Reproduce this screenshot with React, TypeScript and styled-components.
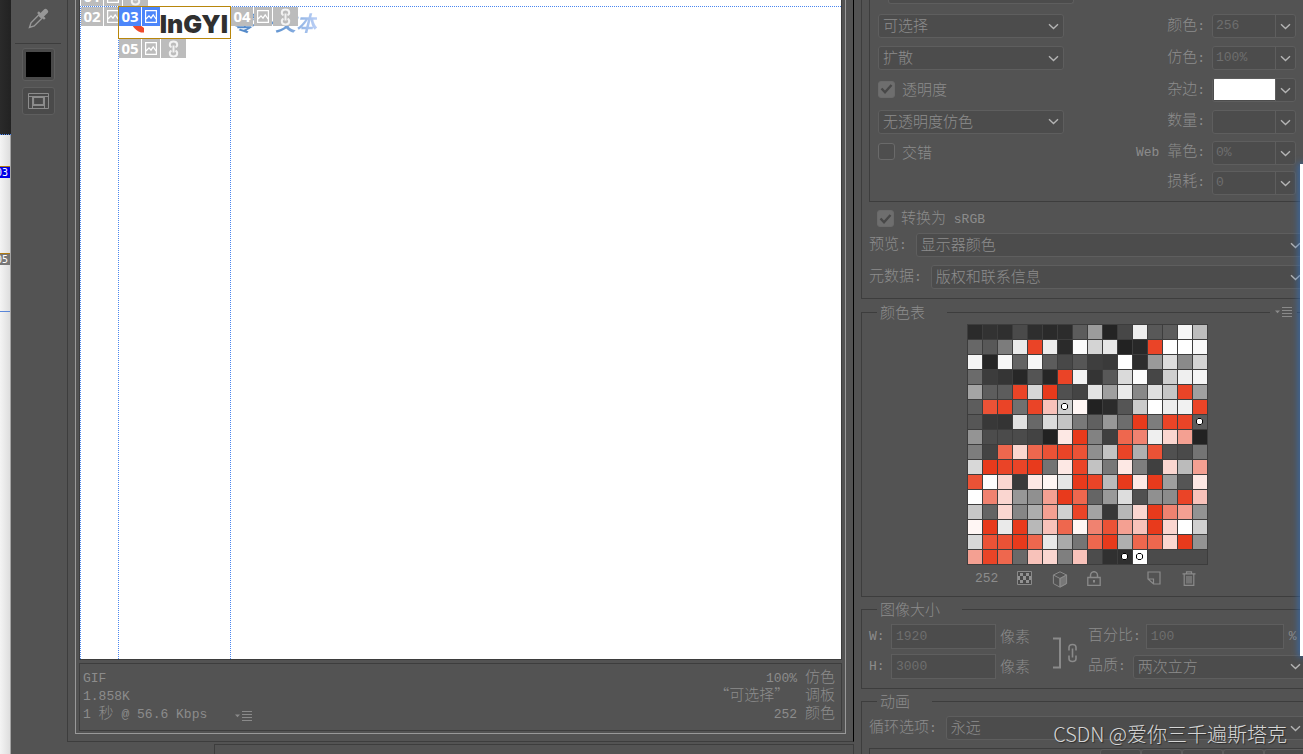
import React from 'react';
import styled, { createGlobalStyle, css } from 'styled-components';

const c = {
  panel: '#535353',
  field: '#4c4c4c',
  edge: '#5e5e5e',
  line: '#3d3d3d',
  text: '#8c8c8c',
  dim: '#6e6e6e',
  icon: '#8a8a8a',
  chevron: '#b4b4b4',
  guide: '#4a86f0',
};

const cjk = '"Noto Sans CJK SC", "Noto Sans", sans-serif';
const mono = '"Liberation Mono", "Noto Sans CJK SC", monospace';

const Global = createGlobalStyle`
  *, *::before, *::after { box-sizing: border-box; }
  body {
    margin: 0;
    background: ${c.panel};
    color: ${c.text};
    font-family: ${cjk};
    font-weight: 300;
    font-size: 15px;
    line-height: 22px;
    overflow: hidden;
  }
  button, input, select { font: inherit; color: inherit; margin: 0; }
`;

const Page = styled.div`
  position: relative;
  display: flex;
  height: 100vh;
  overflow: hidden;
`;

const En = styled.span`
  font-family: ${mono};
  font-size: 13px;
  white-space: pre;
`;

/* ---------- document edge behind the dialog ---------- */

const Behind = styled.div`
  flex: none;
  width: 11px;
  display: flex;
  flex-direction: column;
  overflow: hidden;
`;

const BehindDark = styled.div`
  height: 135px;
  flex: none;
  background: linear-gradient(90deg, #2a2a2a, #222);
  border-bottom: 1px dotted ${c.guide};
`;

const BehindPage = styled.div`
  flex: 1;
  padding-top: 31px;
  background: linear-gradient(90deg, #f4f4f4, #dedede);
  border-right: 1px solid #a4a4a4;
`;

const BehindSlice = styled.div<{ $color: string; $height: number }>`
  height: ${p => p.$height}px;
  border-top: 1px solid #b07a10;
  display: flex;
  justify-content: flex-end;

  span {
    height: 11px;
    padding-right: 2px;
    background: ${p => p.$color};
    color: #fff;
    font-family: "DejaVu Sans Mono", monospace;
    font-size: 10px;
    line-height: 11px;
  }
`;

const BehindGuide = styled.div`
  border-top: 1px solid #5a86d8;
`;

/* ---------- tools ---------- */

const Toolbar = styled.nav`
  flex: none;
  width: 56px;
  padding: 6px 6px 0 4px;
  display: flex;
  flex-direction: column;
  align-items: center;
`;

const ToolButton = styled.button<{ $height: number; $bare?: boolean }>`
  width: 33px;
  height: ${p => p.$height}px;
  padding: 0;
  display: flex;
  align-items: center;
  justify-content: center;
  border: 1px solid ${p => (p.$bare ? 'transparent' : c.edge)};
  border-radius: 3px;
  background: ${p => (p.$bare ? 'none' : '#4a4a4a')};
  color: ${c.icon};
`;

const ToolDivider = styled.hr`
  width: 46px;
  margin: 13px 0 4px;
  border: 0;
  border-top: 1px solid ${c.line};
`;

const BlackSwatch = styled.span`
  width: 25px;
  height: 25px;
  background: #000;
`;

const ToolGap = styled.div`
  height: 6px;
`;

/* ---------- preview ---------- */

const Preview = styled.main`
  flex: 1;
  min-width: 0;
  display: flex;
  flex-direction: column;
`;

const PreviewOuter = styled.div`
  flex: 1;
  min-height: 0;
  display: flex;
  padding: 0 7px 7px;
  border: solid ${c.line};
  border-width: 0 0 1px 1px;
  border-right: 1px solid #000;
`;

const PreviewFrame = styled.div`
  flex: 1;
  min-width: 0;
  display: flex;
  flex-direction: column;
  padding: 0 3px 2px;
  border: solid #999;
  border-width: 0 1px 1px;
`;

const Canvas = styled.div`
  position: relative;
  flex: 1;
  min-height: 0;
  overflow: hidden;
  margin-bottom: 3px;
  border: solid ${c.line};
  border-width: 0 1px 1px;
  background: #fff;
`;

const GuideH = styled.div`
  position: absolute;
  top: 6px;
  left: 0;
  right: 0;
  border-top: 1px dotted ${c.guide};
`;

const GuideV = styled.div<{ $x: number }>`
  position: absolute;
  top: 6px;
  bottom: 0;
  left: ${p => p.$x}px;
  border-left: 1px dotted ${c.guide};
`;

const SelectedSlice = styled.div`
  position: absolute;
  left: 38px;
  top: 6px;
  width: 113px;
  height: 33px;
  border: 1px solid #b8860b;
  background: #fff;
`;

const LogoMark = styled.svg`
  position: absolute;
  left: 13px;
  top: 15px;
`;

const LogoText = styled.span`
  position: absolute;
  right: 2px;
  top: 5px;
  color: #303030;
  font-family: Inter, sans-serif;
  font-weight: 900;
  font-size: 25px;
  line-height: 24px;
`;

const BrandText = styled.span`
  position: absolute;
  left: 153px;
  top: 10px;
  font-size: 21px;
  line-height: 24px;
  font-weight: 700;
  font-style: italic;
  color: transparent;
  background: linear-gradient(90deg, #4f86c6, #6a9ad4 60%, #bcd0f6);
  background-clip: text;
`;

const TagRow = styled.div<{ $x: number; $y: number; $active?: boolean }>`
  position: absolute;
  left: ${p => p.$x}px;
  top: ${p => p.$y}px;
  display: flex;
  gap: 1px;
  color: #fff;

  > * {
    height: 19px;
    display: flex;
    align-items: center;
    justify-content: center;
    background: ${p => (p.$active ? '#4c86fa' : '#bcbcbc')};
  }
`;

const TagNumber = styled.span`
  width: 22px;
  padding-bottom: 1px;
  font-family: "Open Sans", sans-serif;
  font-weight: 700;
  font-size: 15px;
  line-height: 18px;
`;

const TagPicture = styled.span`
  width: 18px;
`;

const TagLink = styled.span`
  width: 25px;
`;

const Info = styled.div`
  flex: none;
  height: 68px;
  padding: 3px 6px 0 3px;
  display: flex;
  justify-content: space-between;
  border: 1px solid ${c.line};
  line-height: 18px;
`;

const InfoColumn = styled.div<{ $end?: boolean }>`
  display: flex;
  flex-direction: column;
  text-align: ${p => (p.$end ? 'right' : 'left')};

  > div { height: 18px; white-space: pre; }
`;

const InfoSpeed = styled.div`
  display: flex;
  gap: 28px;
`;

const MenuButton = styled.button`
  padding: 0;
  border: 0;
  background: none;
  color: ${c.icon};
  display: inline-flex;
  align-items: center;
`;

const SpeedMenu = styled(MenuButton)`
  padding-top: 8px;
`;

const PreviewFooter = styled.div`
  flex: none;
  height: 12px;
  padding: 2px 0 0 147px;

  div {
    height: 10px;
    border: solid ${c.line};
    border-width: 1px 1px 0;
  }
`;

/* ---------- settings ---------- */

const Settings = styled.aside`
  flex: none;
  width: 449px;
  padding-left: 7px;
  overflow: hidden;

  label { padding-bottom: 2px; }
`;

const Optimise = styled.section`
  margin-bottom: 2px;
  padding-left: 7px;
  border: solid ${c.line};
  border-width: 0 0 1px 1px;
  height: 299px;
`;

const OptimiseBox = styled.div`
  height: 202px;
  padding: 0 7px 0 8px;
  border: solid ${c.line};
  border-width: 0 0 1px 1px;
`;

const CutField = styled.div`
  width: 186px;
  height: 4px;
  margin: 0 0 6px 10px;
  border: solid ${c.edge};
  border-width: 0 1px 1px;
  border-radius: 0 0 3px 3px;
  background: ${c.field};
`;

const OptionGrid = styled.div`
  display: grid;
  grid-template-columns: 186px 1fr;
  grid-template-rows: repeat(3, 32px) repeat(2, 31px) 29px;
  align-items: center;
`;

const OptionRight = styled.div`
  grid-column: 2;
  display: flex;
  align-items: center;
  justify-content: flex-end;
  gap: 7px;
`;

const boxed = css`
  border: 1px solid ${c.edge};
  border-radius: 3px;
  background: ${c.field};
`;

const SelectWrap = styled.span<{ $bleed?: boolean }>`
  flex: 1;
  display: grid;
  align-items: center;
  margin-right: ${p => (p.$bleed ? '-3px' : '0')};

  > * { grid-area: 1 / 1; }
  > svg { justify-self: end; margin-right: 5px; pointer-events: none; }
`;

const SelectBox = styled.select`
  ${boxed}
  appearance: none;
  width: 100%;
  height: 24px;
  padding: 0 4px 2px;
  line-height: 20px;
  color: ${c.text};
`;

const Combo = styled.span`
  ${boxed}
  flex: none;
  display: flex;
  width: 84px;
  height: 24px;
  overflow: hidden;
`;

const ComboInput = styled.input`
  flex: 1;
  min-width: 0;
  padding: 0 3px;
  border: 0;
  background: none;
  color: ${c.dim};
  font-family: ${mono};
  font-size: 13px;
`;

const ComboColor = styled.button`
  flex: 1;
  margin: 0 0 1px 1px;
  padding: 0;
  border: 0;
  background: #fff;
`;

const ComboArrow = styled.button`
  width: 20px;
  padding: 1px 0 0;
  display: flex;
  align-items: center;
  justify-content: center;
  border: 0;
  border-left: 1px solid ${c.edge};
  background: none;
`;

const CheckLabel = styled.label`
  display: flex;
  align-items: center;
  gap: 7px;
  white-space: pre;
`;

const CheckBox = styled.input`
  appearance: none;
  width: 17px;
  height: 17px;
  border: 1px solid #6a6a6a;
  border-radius: 3px;
  background: #4e4e4e;

  &:checked {
    background: #6e6e6e;
  }
`;

const CheckHolder = styled.span`
  display: grid;
  place-items: center;
  > * { grid-area: 1 / 1; }
  svg { pointer-events: none; }
`;

const Row = styled.div`
  display: flex;
  align-items: center;
  gap: 9px;
  height: 24px;
  margin-bottom: 8px;
  white-space: nowrap;
`;

const ConvertRow = styled.div`
  height: 31px;
  padding: 4px 0 0 8px;
`;

const LoopRow = styled(Row)`
  margin-top: 4px;
`;

const Group = styled.fieldset<{ $height: number }>`
  position: relative;
  min-width: 0;
  height: ${p => p.$height}px;
  margin: 0 0 1px;
  padding: 0 0 0 7px;
  border: solid ${c.line};
  border-width: 1px 0 1px 1px;
`;

const Legend = styled.legend`
  height: 22px;
  margin-left: 8px;
  padding: 0 22px 0 3px;
`;

const GroupMenu = styled.span`
  position: absolute;
  right: 6px;
  top: -22px;
  height: 22px;
  padding: 0 4px 0 5px;
  display: flex;
  align-items: center;
  background: ${c.panel};
`;

const PaletteArea = styled.div`
  width: 241px;
  margin: 1px 0 0 98px;
`;

const Palette = styled.div`
  display: grid;
  grid-template-columns: repeat(16, 14px);
  grid-auto-rows: 14px;
  gap: 1px;
  padding: 1px;
  background: ${c.line};
`;

const Swatch = styled.span<{ $color: string; $span?: number }>`
  grid-column: span ${p => p.$span ?? 1};
  display: grid;
  place-items: center;
  padding: 0 1px 1px 0;
  background: ${p => p.$color};
`;

const PaletteTools = styled.div`
  display: flex;
  align-items: center;
  height: 28px;
  padding: 0 10px 0 8px;
  gap: 19px;
`;

const Spacer = styled.span`
  flex: 1;
`;

const IconButton = styled.button`
  width: 16px;
  height: 16px;
  padding: 0;
  border: 0;
  background: none;
  color: ${c.icon};
  display: flex;
`;

const SizeGrid = styled.div`
  display: flex;
  padding-top: 4px;
`;

const SizeColumn = styled.div<{ $grow?: boolean }>`
  flex: ${p => (p.$grow ? 1 : 'none')};
  display: flex;
  flex-direction: column;
  gap: 5px;
`;

const SizeRow = styled.div<{ $gap: number }>`
  display: flex;
  align-items: center;
  gap: ${p => p.$gap}px;
  height: 25px;
  white-space: nowrap;
`;

const AxisLabel = styled.label`
  width: 18px;
`;

const Unit = styled.span`
  padding-bottom: 2px;
`;

const SizeInput = styled.input<{ $width: number }>`
  width: ${p => p.$width}px;
  height: 25px;
  padding: 0 4px;
  border: 1px solid ${c.edge};
  background: ${c.field};
  color: ${c.dim};
  font-family: ${mono};
  font-size: 13px;
`;

const LinkDrawing = styled.svg`
  flex: none;
  margin: 13px 10px 0 23px;
`;

const Frames = styled.div`
  height: 20px;
  display: flex;
  padding-left: 230px;
  border: solid ${c.line};
  border-width: 1px 0 0 1px;
`;

const FrameButton = styled.button`
  flex: none;
  width: 41px;
  padding: 0;
  ${boxed}
`;

const BrowserEdge = styled.div`
  position: absolute;
  right: 0;
  top: 164px;
  width: 3px;
  height: 492px;
  background: #fff;
  box-shadow: 0 0 7px 1px #2f6fc0;
`;

const Watermark = styled.div`
  position: absolute;
  right: 16px;
  bottom: 5px;
  color: #d6d6d6;
  font-size: 20px;
  line-height: 30px;
  text-shadow: 1px 1px 1px #2c2c2c;
  white-space: nowrap;
`;

/* ---------- drawings ---------- */

const Chevron = () => (
  <svg width="11" height="7" viewBox="0 0 11 7" fill="none" stroke={c.chevron} strokeWidth="1.4">
    <path d="M1 1.2 5.5 5.5 10 1.2" />
  </svg>
);

const MenuGlyph = () => (
  <svg width="18" height="10" viewBox="0 0 18 10" fill={c.icon}>
    <path d="M0 3.5h5L2.5 6.3z" />
    <path d="M7 0h10v1H7zM7 3h10v1H7zM7 6h10v1H7zM7 9h10v1H7z" />
  </svg>
);

const Tick = () => (
  <svg width="13" height="12" viewBox="0 0 13 12" fill="none" stroke="#484848" strokeWidth="2.4">
    <path d="M1.5 5.5 5 9.2 11.5 2" />
  </svg>
);

const PictureGlyph = () => (
  <svg width="12" height="13" viewBox="0 0 12 13" fill="none" stroke="#fff" strokeWidth="1.2">
    <path d="M.6.6h10.8v11.8H.6zM1 9l3-3.2 2 2.4 2.2-3.4L11 9" />
  </svg>
);

const ChainGlyph = () => (
  <svg width="11" height="18" viewBox="0 0 11 18" fill="none" stroke="#f2f2f2" strokeWidth="2">
    <path d="M3.5 7.2C1 6.2 1 1.6 5.5 1.6S10 6.2 7.5 7.2M3.5 10.8C1 11.8 1 16.4 5.5 16.4S10 11.8 7.5 10.8M5.5 5.5v7" />
  </svg>
);

const Eyedropper = () => (
  <svg width="21" height="21" viewBox="0 0 21 21" fill="none" stroke="#989898">
    <path d="M11.5 6.3 3 14.8 1.5 19.5l4.7-1.5 8.5-8.5" strokeWidth="1.4" />
    <path d="m10 4.2 6.8 6.8" strokeWidth="2.4" />
    <path d="m13.5 7.5 4-4" strokeWidth="5" strokeLinecap="round" />
  </svg>
);

const SliceVisibility = () => (
  <svg width="21" height="16" viewBox="0 0 21 16" fill="none" stroke="#8c8c8c">
    <path d="M.5.5h20v15H.5zM.5 3.5h20M4.5 3.5v12M16.5 3.5v12M4.5 12.5h12" />
    <path d="M5.5 4.5h10v7h-10z" strokeWidth="1.2" />
  </svg>
);

const Checker = () => (
  <svg width="15" height="14" viewBox="0 0 15 14">
    <path d="M.5.5h14v13H.5z" fill="#4a4a4a" stroke={c.icon} />
    <path d="M3 2h3v3H3zM9 2h3v3H9zM6 5h3v4H6zM3 9h3v3H3zM9 9h3v3H9zM1 5h2v4H1zM12 5h2v4h-2z" fill="#929292" />
  </svg>
);

const Cube = () => (
  <svg width="16" height="17" viewBox="0 0 16 17" fill="none" stroke={c.icon}>
    <path d="M8 7.5V16l6.5-3.5V4z" fill="#777" />
    <path d="m8 .8 6.6 3.2v8.6L8 16.2l-6.6-3.6V4zM1.4 4 8 7.5 14.6 4M8 7.5V16" />
  </svg>
);

const Lock = () => (
  <svg width="14" height="15" viewBox="0 0 14 15" fill="none" stroke={c.icon}>
    <path d="M.8 6.5h12.4v7.8H.8z" strokeWidth="1.3" />
    <path d="M3.5 6.5V4.2a3.5 3.5 0 0 1 7 0v2.3" strokeWidth="1.5" />
    <path d="M6 9h2v2.5H6z" fill={c.icon} stroke="none" />
  </svg>
);

const NewColor = () => (
  <svg width="14" height="14" viewBox="0 0 14 14" fill="none" stroke={c.icon} strokeWidth="1.2">
    <path d="M1 8V1h12v12H6.5zM1 8h5.5v5" />
  </svg>
);

const Trash = () => (
  <svg width="14" height="15" viewBox="0 0 14 15" fill="none" stroke={c.icon} strokeWidth="1.2">
    <path d="M.5 2.8h13M4.5 2.5V.8h5v1.7M2.2 3v11.3h9.6V3M5 5v7.5M7 5v7.5M9 5v7.5" />
  </svg>
);

const Dot = () => (
  <svg width="7" height="7" viewBox="0 0 7 7">
    <path d="M2 .5h3l1.5 1.5v3L5 6.5H2L.5 5V2z" fill="#fff" stroke="#000" />
  </svg>
);

/* ---------- data ---------- */

const reds: Record<string, string> = {
  r0: '#e83a1c', r1: '#ea4427', r2: '#eb5236', r3: '#ee674e', r4: '#f08270',
  r5: '#f4a092', r6: '#f8c2ba', r7: '#fad6d0', r8: '#fde8e4', r9: '#fff6f4',
};

const palette = `
2b 32 2f 4a 2e 2a 2c 5c 9c 24 47 ee 58 5c f6 bd
67 58 7c ea r1 ec 2a fb d4 e7 22 28 r1 fe ff f9
f4 26 f7 64 f6 5c 48 56 3e 3a ff 2d 9a dd 8a d4
6b 3c 35 27 54 26 r1 f2 34 58 da fc 46 cf ef f5
a4 5d 5c r1 d6 r0 50 44 e3 9f ea 88 df c6 r1 a0
5d r2 r1 70 r1 r6 cf* r9 22 2b 55 cb ff ed f1 r1
56 38 34 e1 68 db c4 79 60 98 6d r0 7d r1 r1 5c*
94 4c 4b 4b 43 22 r8 r0 82 3f r3 r4 ef r7 r5 22
7d 43 r3 r7 r3 r2 r1 r2 8f c3 r1 af r2 50 4a 74
d8 r0 r1 r1 r0 73 r8 r1 c2 78 r8 7e 40 r7 bb r5
r2 fd r7 3a r8 r9 e6 r0 r1 bb r0 r8 r0 9f 55 r8
ff r4 r7 97 90 r5 r0 r3 65 99 dd 50 90 8c r1 r6
c6 64 r7 86 ad r5 d0 r1 a3 38 b7 r7 r0 r4 r5 93
r9 r0 ea r0 b8 r6 r3 r9 r4 r2 r5 r6 r0 r7 ff d0
d8 r2 r2 r0 r3 e8 aa 75 r3 r0 af r3 r3 r7 r0 93
r5 r1 r3 69 r6 r7 7f r6 4c 30 2f* ff*`.trim().split(/\s+/).map(code => {
  const key = code.slice(0, 2);
  return { color: reds[key] ?? `#${key}${key}${key}`, marked: code.endsWith('*') };
});

/* ---------- parts ---------- */

function Select({ id, value, bleed, label }: { id: string; value: string; bleed?: boolean; label?: string }) {
  return (
    <SelectWrap $bleed={bleed}>
      <SelectBox id={id} aria-label={label}>
        <option>{value}</option>
      </SelectBox>
      <Chevron />
    </SelectWrap>
  );
}

function Check({ checked, children }: { checked?: boolean; children: React.ReactNode }) {
  return (
    <CheckLabel>
      <CheckHolder>
        <CheckBox type="checkbox" defaultChecked={checked} />
        {checked && <Tick />}
      </CheckHolder>
      <span>{children}</span>
    </CheckLabel>
  );
}

function ComboField({ id, label, prefix, value, color }: { id: string; label: string; prefix?: string; value?: string; color?: boolean }) {
  return (
    <OptionRight>
      <label htmlFor={id}>{prefix && <En>{prefix}</En>}{label}<En>:</En></label>
      <Combo>
        {color ? <ComboColor id={id} /> : <ComboInput id={id} defaultValue={value} />}
        <ComboArrow aria-label={label}><Chevron /></ComboArrow>
      </Combo>
    </OptionRight>
  );
}

function SliceTag({ x, y, number, active, linked }: { x: number; y: number; number: string; active?: boolean; linked?: boolean }) {
  return (
    <TagRow $x={x} $y={y} $active={active}>
      <TagNumber>{number}</TagNumber>
      <TagPicture><PictureGlyph /></TagPicture>
      {linked && <TagLink><ChainGlyph /></TagLink>}
    </TagRow>
  );
}

export default function App() {
  return (
    <Page lang="zh-CN">
      <Global />

      <Behind>
        <BehindDark />
        <BehindPage>
          <BehindSlice $color="#0000e6" $height={87}><span>03</span></BehindSlice>
          <BehindSlice $color="#777" $height={58}><span>05</span></BehindSlice>
          <BehindGuide />
        </BehindPage>
      </Behind>

      <Toolbar>
        <ToolButton $height={24} $bare aria-label="吸管工具"><Eyedropper /></ToolButton>
        <ToolDivider />
        <ToolButton $height={33} aria-label="吸管颜色"><BlackSwatch /></ToolButton>
        <ToolGap />
        <ToolButton $height={28} aria-label="切换切片可见性"><SliceVisibility /></ToolButton>
      </Toolbar>

      <Preview>
        <PreviewOuter>
          <PreviewFrame>
            <Canvas>
              <BrandText>零一文本</BrandText>
              <SliceTag x={1} y={-13} number="01" linked />
              <SliceTag x={1} y={7} number="02" />
              <GuideH />
              <GuideV $x={0} />
              <GuideV $x={38} />
              <GuideV $x={150} />
              <SelectedSlice>
                <LogoMark width="14" height="11" viewBox="0 0 14 11">
                  <path d="M0 3h8l4 3v4.5H9Q4 9 0 3z" fill="#ee4a2c" />
                </LogoMark>
                <LogoText>InGYI</LogoText>
              </SelectedSlice>
              <SliceTag x={39} y={7} number="03" active />
              <SliceTag x={151} y={7} number="04" linked />
              <SliceTag x={39} y={39} number="05" linked />
            </Canvas>
            <Info>
              <InfoColumn>
                <div><En>GIF</En></div>
                <div><En>1.858K</En></div>
                <InfoSpeed>
                  <span><En>1 </En>秒<En> @ 56.6 Kbps</En></span>
                  <SpeedMenu aria-label="下载速度"><MenuGlyph /></SpeedMenu>
                </InfoSpeed>
              </InfoColumn>
              <InfoColumn $end>
                <div><En>100% </En>仿色</div>
                <div>“可选择”<En>  </En>调板</div>
                <div><En>252 </En>颜色</div>
              </InfoColumn>
            </Info>
          </PreviewFrame>
        </PreviewOuter>
        <PreviewFooter><div /></PreviewFooter>
      </Preview>

      <Settings>
        <Optimise>
          <OptimiseBox>
            <CutField />
            <OptionGrid>
              <Select id="reduction" value="可选择" label="减低颜色深度算法" />
              <ComboField id="colors" label="颜色" value="256" />
              <Select id="dither-kind" value="扩散" label="仿色算法" />
              <ComboField id="dither" label="仿色" value="100%" />
              <Check checked>透明度</Check>
              <ComboField id="matte" label="杂边" color />
              <Select id="transparency-dither" value="无透明度仿色" label="透明度仿色算法" />
              <ComboField id="amount" label="数量" />
              <Check>交错</Check>
              <ComboField id="web-snap" prefix="Web " label="靠色" value="0%" />
              <ComboField id="lossy" label="损耗" value="0" />
            </OptionGrid>
          </OptimiseBox>
          <ConvertRow><Check checked>转换为<En> sRGB</En></Check></ConvertRow>
          <Row>
            <label htmlFor="preview">预览<En>:</En></label>
            <Select id="preview" value="显示器颜色" bleed />
          </Row>
          <Row>
            <label htmlFor="metadata">元数据<En>:</En></label>
            <Select id="metadata" value="版权和联系信息" bleed />
          </Row>
        </Optimise>

        <Group $height={296}>
          <Legend>颜色表</Legend>
          <GroupMenu><MenuButton aria-label="颜色表菜单"><MenuGlyph /></MenuButton></GroupMenu>
          <PaletteArea>
            <Palette>
              {palette.map((s, i) => (
                <Swatch key={i} $color={s.color}>{s.marked && <Dot />}</Swatch>
              ))}
              <Swatch $color="#4b4b4b" $span={4} />
            </Palette>
            <PaletteTools>
              <En>252</En>
              <IconButton aria-label="映射为透明"><Checker /></IconButton>
              <IconButton aria-label="Web 颜色"><Cube /></IconButton>
              <IconButton aria-label="锁定颜色"><Lock /></IconButton>
              <Spacer />
              <IconButton aria-label="新建颜色"><NewColor /></IconButton>
              <IconButton aria-label="删除颜色"><Trash /></IconButton>
            </PaletteTools>
          </PaletteArea>
        </Group>

        <Group $height={91}>
          <Legend>图像大小</Legend>
          <SizeGrid>
            <SizeColumn>
              <SizeRow $gap={4}>
                <AxisLabel htmlFor="width"><En>W:</En></AxisLabel>
                <SizeInput id="width" $width={105} defaultValue="1920" />
                <Unit>像素</Unit>
              </SizeRow>
              <SizeRow $gap={4}>
                <AxisLabel htmlFor="height"><En>H:</En></AxisLabel>
                <SizeInput id="height" $width={105} defaultValue="3000" />
                <Unit>像素</Unit>
              </SizeRow>
            </SizeColumn>
            <LinkDrawing width="25" height="32" viewBox="0 0 25 32" fill="none" stroke={c.icon}>
              <path d="M0 1.5h7v29H0" strokeWidth="2" />
              <path d="M16 13.5v-3q0-3 3.5-3t3.5 3v3M16 18.5v3q0 3 3.5 3t3.5-3v-3M19.5 11.5v9" strokeWidth="1.6" />
            </LinkDrawing>
            <SizeColumn $grow>
              <SizeRow $gap={5}>
                <label htmlFor="percent">百分比<En>:</En></label>
                <SizeInput id="percent" $width={138} defaultValue="100" />
                <En>%</En>
              </SizeRow>
              <SizeRow $gap={7}>
                <label htmlFor="quality">品质<En>:</En></label>
                <Select id="quality" value="两次立方" bleed />
              </SizeRow>
            </SizeColumn>
          </SizeGrid>
        </Group>

        <Group $height={80}>
          <Legend>动画</Legend>
          <LoopRow>
            <label htmlFor="loop">循环选项<En>:</En></label>
            <Select id="loop" value="永远" bleed />
          </LoopRow>
          <Frames>
            {['首帧', '上一帧', '播放', '下一帧', '末帧'].map(name => (
              <FrameButton key={name} aria-label={name} />
            ))}
          </Frames>
        </Group>
      </Settings>

      <BrowserEdge />
      <Watermark>CSDN @爱你三千遍斯塔克</Watermark>
    </Page>
  );
}
